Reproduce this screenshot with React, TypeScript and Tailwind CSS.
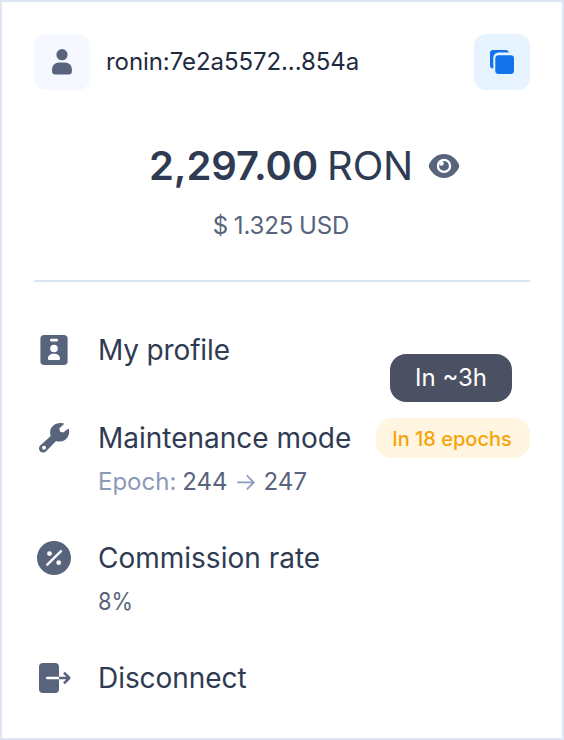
import type { ReactNode } from "react";

const UserIcon = () => (
  <svg viewBox="0 0 56 56" className="size-14 fill-[#57647c]">
    <circle cx="28" cy="20.7" r="5.6" />
    <path d="M25 28.600h6c4 0 6.900 3.200 6.900 7v2c0 1.900-1.200 3-3.200 3H21.300c-2 0-3.200-1.100-3.200-3v-2c0-3.800 2.900-7 6.900-7z" />
  </svg>
);

const CopyIcon = () => (
  <svg viewBox="0 0 56 56" className="size-14 fill-[#1273ea]">
    <rect x="21.300" y="21.300" width="18.700" height="18.700" rx="3.200" />
    <path d="M19 16h12.800c1.700 0 2.900.9 2.900 2.600H25.500c-4 0-6.200 2.200-6.200 6.200v9.700c-2.200 0-3.300-1-3.300-3V19c0-2 1-3 3-3z" />
  </svg>
);

const EyeIcon = () => (
  <svg viewBox="0 0 32 32" className="size-8">
    <path
      d="M16 4C9.500 4 4.300 8.200 1.400 13.700c-.8 1.500-.8 3.100 0 4.600C4.300 23.800 9.500 28 16 28s11.700-4.200 14.600-9.700c.8-1.500.8-3.100 0-4.600C27.700 8.200 22.500 4 16 4z"
      fill="#57647c"
    />
    <circle cx="16" cy="15.900" r="7.200" fill="#fff" />
    <circle cx="16" cy="15.900" r="4.900" fill="#57647c" />
    <circle cx="13.500" cy="13.400" r="2.300" fill="#fff" />
  </svg>
);

const ProfileIcon = () => (
  <svg viewBox="0 0 40 40" className="size-10">
    <rect x="6.400" y="5" width="27.200" height="30" rx="3.800" fill="#57647c" />
    <g fill="#fff">
      <rect x="16" y="8.700" width="8" height="2.700" rx="1.100" />
      <circle cx="20" cy="18.500" r="3.800" />
      <path d="M14 28.700c0-3.300 2.500-5 6-5s6 1.700 6 5c0 .9-.4 1.300-1.300 1.300h-9.400c-.9 0-1.300-.4-1.300-1.300z" />
    </g>
  </svg>
);

const WrenchIcon = () => (
  <svg viewBox="0 0 40 40" className="size-10">
    <path
      d="M29.500 5.500C22.500 3.600 16.100 8.300 16.100 14.500c0 1.300.2 2.500.6 3.500L6.200 27.500C4.600 29 4.600 31.700 6.200 33.400c1.700 1.600 4.400 1.500 5.900-.1l10-10.300c1 .4 2.300.7 3.800.6 6.200-.4 10.300-6 9.100-12.200-.2-.6-.7-.7-1.200-.3l-4.700 3.300-3-.6-.8-3.200 4.400-4.300c.5-.4.400-.7-.2-.8z"
      fill="#57647c"
    />
    <circle cx="10" cy="29.700" r="2" fill="#fff" />
  </svg>
);

const PercentIcon = () => (
  <svg viewBox="0 0 40 40" className="size-10">
    <circle cx="20" cy="20" r="17" fill="#57647c" />
    <path d="M13.300 26.700 27 13.200" stroke="#fff" strokeWidth="2.400" strokeLinecap="round" />
    <circle cx="15.500" cy="15.600" r="2.400" fill="#fff" />
    <circle cx="24.700" cy="24.700" r="2.400" fill="#fff" />
  </svg>
);

const DisconnectIcon = () => (
  <svg viewBox="0 0 40 40" className="size-10" fill="none" strokeWidth="2.500">
    <rect x="5" y="5" width="20" height="30" rx="4" fill="#57647c" />
    <path d="M13.200 20H25" stroke="#fff" strokeLinecap="round" />
    <path d="M25 20h10M30 14.700l5.300 5.300-5.300 5.300" stroke="#57647c" strokeLinejoin="round" />
  </svg>
);

const ArrowIcon = () => (
  <svg viewBox="0 0 20 20" className="h-5 w-5" fill="none" stroke="#8c9ab8" strokeWidth="1.700">
    <path d="M1.200 10.400h16.500M10.800 3.400l7 7-7 7" />
  </svg>
);

type ItemProps = { icon: ReactNode; label: string; className?: string; badge?: ReactNode; children?: ReactNode };

const MenuItem = ({ icon, label, className = "", badge, children }: ItemProps) => (
  <li className="flex gap-6">
    <span className="shrink-0">{icon}</span>
    <div className="min-w-0 flex-1">
      <div className="flex h-10 items-center justify-between">
        <span className={`whitespace-nowrap text-[28px] leading-10 text-[#2f3b52] ${className}`}>{label}</span>
        {badge}
      </div>
      {children && (
        <div className="mt-1 flex h-10 items-center text-2xl leading-10 text-[#57647c]">{children}</div>
      )}
    </div>
  </li>
);

export default function App() {
  return (
    <main className="h-[740px] w-[564px] border-2 border-[#dde6f2] bg-white p-8 font-['Inter',sans-serif] font-[385]">
      <header className="flex items-center">
        <div className="rounded-xl bg-[#f5f9ff]">
          <UserIcon />
        </div>
        <span className="ml-4 text-2xl tracking-[-0.07px] text-[#1f2b40]">ronin:7e2a5572...854a</span>
        <button className="ml-auto rounded-xl bg-[#e7f4ff]" aria-label="Copy address">
          <CopyIcon />
        </button>
      </header>

      <section className="mt-12 flex flex-col items-center border-b-2 border-[#dbe5f0] pb-[34px]">
        <div className="flex h-14 items-center pl-[45px] text-[40px] text-[#2f3b52]">
          <span className="font-semibold tracking-[-0.1px]">2,297.00</span>
          <span className="ml-[9px] tracking-[-0.2px]">RON</span>
          <span className="ml-[15px]">
            <EyeIcon />
          </span>
        </div>
        <div className="mt-3 h-10 pr-0.5 text-2xl leading-10 tracking-[-0.1px] [word-spacing:-1px] text-[#57647c]">$ 1.325 USD</div>
      </section>

      <ul className="mt-12 flex flex-col">
        <MenuItem icon={<ProfileIcon />} label="My profile" className="tracking-[-0.15px]" />
        <li className="h-12" aria-hidden="true" />
        <MenuItem
          icon={<WrenchIcon />}
          label="Maintenance mode"
          badge={
            <span className="relative flex h-10 w-[154px] items-center justify-center rounded-2xl bg-[#fff5e0] pt-0.5 pr-0.5 text-xl font-[480] text-[#f7a30a]">
              In 18 epochs
              <span className="absolute -top-16 left-3.5 flex h-12 w-[122px] items-center justify-center rounded-2xl bg-[#4b5163] text-2xl font-[385] text-white">
                In ~3h
              </span>
            </span>
          }
        >
          <span className="text-[#8c9ab8]">Epoch:</span>
          <span className="ml-1.5">244</span>
          <span className="mx-2">
            <ArrowIcon />
          </span>
          <span>247</span>
        </MenuItem>
        <li className="h-9" aria-hidden="true" />
        <MenuItem icon={<PercentIcon />} label="Commission rate">
          <span className="origin-left scale-x-[0.91]">8%</span>
        </MenuItem>
        <li className="h-9" aria-hidden="true" />
        <MenuItem icon={<DisconnectIcon />} label="Disconnect" className="tracking-[-0.05px]" />
      </ul>
    </main>
  );
}
